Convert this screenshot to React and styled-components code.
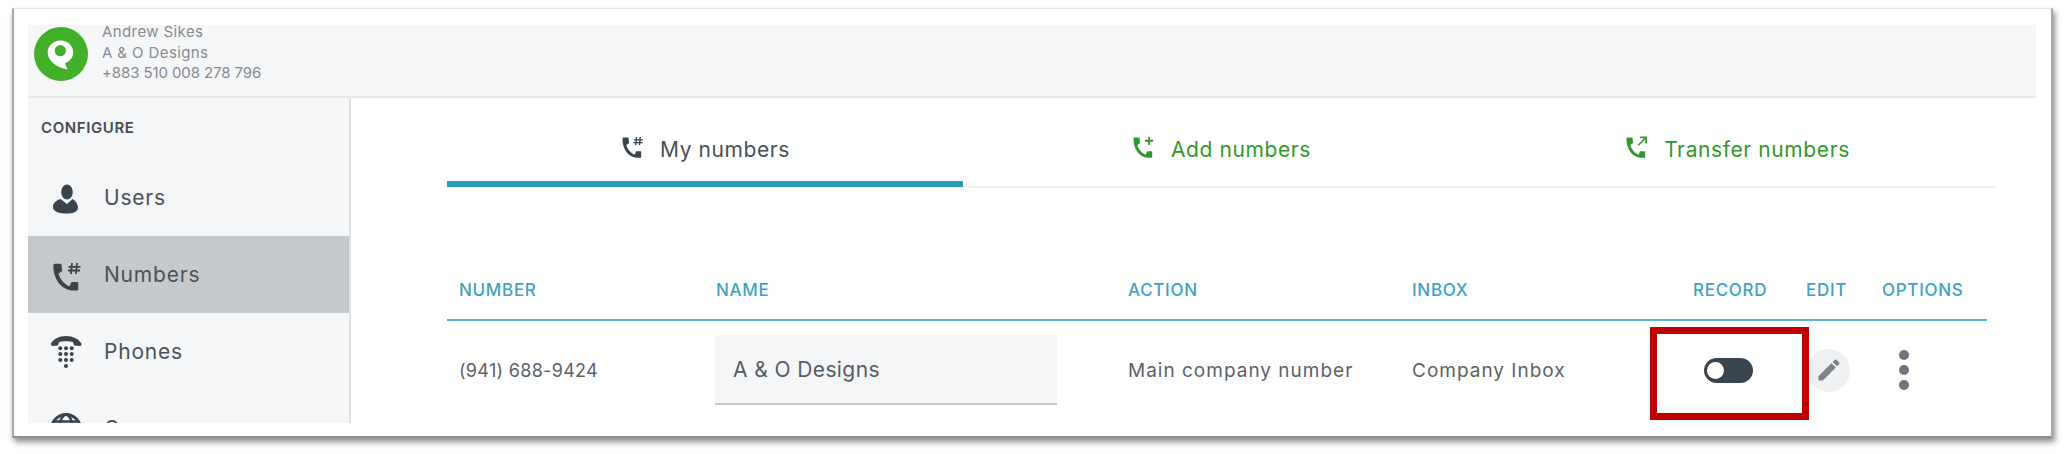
import React from 'react';
import styled, { createGlobalStyle } from 'styled-components';

const GlobalStyle = createGlobalStyle`
  html, body {
    margin: 0;
    background: #fff;
  }

  body {
    font-family: 'Inter', 'Liberation Sans', sans-serif;
    overflow: hidden;
  }
`;

const Page = styled.div`
  width: 2064px;
  height: 454px;
  padding: 8px 0 0 12px;
  box-sizing: border-box;
`;

const Frame = styled.div`
  position: relative;
  width: 2041px;
  height: 430px;
  box-sizing: border-box;
  padding: 16px 15px 13px 14px;
  background: #fff;
  border-top: 1px solid #e6e6e6;
  border-left: 2px solid #a8a8a8;
  border-right: 2px solid #a8a8a8;
  border-bottom: 2px solid #8c8c8c;
  box-shadow: 2px 4px 6px rgba(0, 0, 0, 0.45);
`;

const Shell = styled.div`
  height: 100%;
  display: flex;
  flex-direction: column;
`;

const TopBar = styled.header`
  flex: 0 0 73px;
  box-sizing: border-box;
  display: flex;
  align-items: flex-start;
  gap: 14px;
  padding: 2px 0 0 6px;
  background: #f5f6f8;
  border-bottom: 2px solid #e7e8ea;
`;

const Account = styled.div`
  display: flex;
  flex-direction: column;
  margin-top: -5px;
  font-size: 15px;
  line-height: 20.5px;
  letter-spacing: 0.4px;
  color: #858b93;
`;

const AccountPhone = styled.span`
  letter-spacing: -0.1px;
`;

const Body = styled.div`
  flex: 1;
  min-height: 0;
  display: flex;
  overflow: hidden;
`;

const Sidebar = styled.nav`
  flex: 0 0 323px;
  box-sizing: border-box;
  background: #f5f6f8;
  border-right: 2px solid #dfe0e2;
`;

const SectionTitle = styled.div`
  height: 61px;
  padding: 21px 0 0 13px;
  box-sizing: border-box;
  font-size: 15px;
  line-height: 18px;
  font-weight: 600;
  letter-spacing: 0.6px;
  color: #464c54;
`;

const NavItem = styled.div`
  height: 77px;
  display: flex;
  align-items: center;
  gap: 22px;
  padding-left: 22px;
  font-size: 21px;
  letter-spacing: 0.8px;
  color: #4a525b;
  background: ${(p) => (p.$active ? '#c6c9cc' : 'transparent')};
`;

const NavIcon = styled.svg`
  flex: 0 0 32px;
  width: 32px;
  height: 32px;
  color: #3a444c;
  fill: currentColor;
`;

const Main = styled.main`
  flex: 1;
  min-width: 0;
  padding: 0 41px 0 96px;
`;

const Tabs = styled.div`
  display: flex;
  height: 88px;
  border-bottom: 2px solid #f2f2f2;
`;

const Tab = styled.div`
  flex: 1;
  display: flex;
  align-items: center;
  justify-content: center;
  gap: 16px;
  padding: 40px 0 ${(p) => (p.$active ? 19 : 25)}px;
  margin-bottom: -1px;
  box-sizing: border-box;
  font-size: 21px;
  line-height: 24px;
  letter-spacing: 0.6px;
  color: ${(p) => (p.$active ? '#474f57' : '#2f9a2c')};
  border-bottom: ${(p) => (p.$active ? '6px solid #2b9db9' : '0')};
`;

const TabIcon = styled.svg`
  width: 24px;
  height: 24px;
  margin-top: -8px;
  color: ${(p) => (p.$active ? '#3a444c' : '#2f9a2c')};
  fill: currentColor;
`;

const Row = styled.div`
  display: grid;
  grid-template-columns: 257px 412px 284px 281px 113px 76px 1fr;
  margin-right: 8px;
  padding-left: 12px;
  align-items: center;
`;

const HeadRow = styled(Row)`
  height: 24px;
  margin-top: 90px;
  padding-bottom: 17px;
  border-bottom: 2px solid #5bb4cc;
`;

const HeadCell = styled.div`
  font-size: 17px;
  font-weight: 500;
  letter-spacing: 0.7px;
  color: #3fa3bf;
`;

const BodyRow = styled(Row)`
  margin-top: 14px;
`;

const Cell = styled.div`
  font-size: 19px;
  letter-spacing: 1px;
  color: #5b6168;
`;

const NumberCell = styled(Cell)`
  font-size: 18px;
  letter-spacing: 0.3px;
`;

const NameField = styled.div`
  width: 342px;
  height: 70px;
  margin-left: -1px;
  box-sizing: border-box;
  display: flex;
  align-items: center;
  padding-left: 18px;
  background: #f5f6f8;
  border-bottom: 2px solid #c3c7cb;
  font-size: 21px;
  letter-spacing: 0.4px;
  color: #565c63;
`;

const Toggle = styled.div`
  position: relative;
  width: 49px;
  height: 25px;
  margin-left: 11px;
  border-radius: 13px;
  background: #3b454d;

  &::before {
    content: '';
    position: absolute;
    left: 3px;
    top: 4px;
    width: 17px;
    height: 17px;
    border-radius: 50%;
    background: #fff;
  }
`;

const EditButton = styled.div`
  width: 43px;
  height: 43px;
  margin-left: 1px;
  border-radius: 50%;
  background: #eff0f2;
  display: flex;
  align-items: center;
  justify-content: center;
`;

const Dots = styled.div`
  display: flex;
  flex-direction: column;
  gap: 5px;
  margin-left: 17px;

  span {
    width: 10px;
    height: 10px;
    border-radius: 50%;
    background: #6c747d;
  }
`;

const Highlight = styled.div`
  position: absolute;
  left: 1636px;
  top: 318px;
  width: 159px;
  height: 93px;
  box-sizing: border-box;
  border: 7px solid #c00000;
  pointer-events: none;
`;

const PhoneGlyph = () => (
  <path d="M5 4.800h5.500c.5 0 .9.3.9.8l.8 6.500L8.600 14.500C9.500 19 13 24.500 19.500 27.500l2-4.500h6.800v7.500c0 .6-.4 1-1 1h-5C11 30.500 3.300 20 3.300 6.500c0-1 .7-1.700 1.700-1.700z" />
);

const Hash = () => (
  <path d="M22 4 21 15M27 4 26 15M18.500 7.800h12M18 11.500h12" fill="none" stroke="currentColor" strokeWidth="1.800" />
);

const App = () => {
  return (
    <Page>
      <GlobalStyle />
      <Frame>
        <Shell>
          <TopBar>
            <svg width="54" height="54" viewBox="0 0 54 54">
              <circle cx="27" cy="27" r="27" fill="#43b02a" />
              <path d="M26.500 13.500C33.500 13.500 39.300 18.800 39.300 25.500 39.300 30.500 35.500 34.500 31 36.200L33.500 42.500C28 41.500 22 39 18.500 35.500 15.500 32.500 13.700 29.500 13.700 25.500 13.700 18.800 19.500 13.500 26.500 13.500z" fill="#fff" />
              <circle cx="26.300" cy="23.700" r="5.600" fill="#43b02a" />
            </svg>
            <Account>
              <span>Andrew Sikes</span>
              <span>A &amp; O Designs</span>
              <AccountPhone>+883 510 008 278 796</AccountPhone>
            </Account>
          </TopBar>
          <Body>
            <Sidebar>
              <SectionTitle>CONFIGURE</SectionTitle>
              <NavItem>
                <NavIcon viewBox="0 0 32 32">
                  <ellipse cx="17" cy="10" rx="5.800" ry="7.500" />
                  <path d="M10.500 17C6 18.500 3 21 3 25c0 3 2 4 4 5 5 2 13 2 17 .5 3-1 4-3 4-5.500-.5-4-3-6.500-5.500-8l-5.500 5z" />
                </NavIcon>
                Users
              </NavItem>
              <NavItem $active>
                <NavIcon viewBox="0 0 32 32">
                  <PhoneGlyph />
                  <Hash />
                </NavIcon>
                Numbers
              </NavItem>
              <NavItem>
                <NavIcon viewBox="0 0 32 32">
                  <path d="M.7 8C3 3 9 0 16 0s13 3 15.700 8l-1 2-6.700-.5-1-3.500C20 5 12 5 9 6L8 9.500 2 10z" />
                  <circle cx="10.300" cy="12.200" r="2" /><circle cx="16" cy="12.200" r="2" /><circle cx="21.700" cy="12.200" r="2" />
                  <circle cx="10.300" cy="18" r="2" /><circle cx="16" cy="18" r="2" /><circle cx="21.700" cy="18" r="2" />
                  <circle cx="10.300" cy="24" r="2" /><circle cx="16" cy="24" r="2" /><circle cx="21.700" cy="24" r="2" />
                  <circle cx="16" cy="30" r="2" />
                </NavIcon>
                Phones
              </NavItem>
              <NavItem>
                <NavIcon viewBox="0 0 32 32">
                  <circle cx="16" cy="16" r="14.500" fill="none" stroke="currentColor" strokeWidth="3" />
                  <ellipse cx="16" cy="16" rx="6.500" ry="14.500" fill="none" stroke="currentColor" strokeWidth="2.500" />
                  <path d="M2 16h28M4 8.500h24M4 23.500h24" fill="none" stroke="currentColor" strokeWidth="2.500" />
                </NavIcon>
                Groups
              </NavItem>
            </Sidebar>
            <Main>
              <Tabs>
                <Tab $active>
                  <TabIcon $active viewBox="0 0 32 32">
                    <PhoneGlyph />
                    <Hash />
                  </TabIcon>
                  My numbers
                </Tab>
                <Tab>
                  <TabIcon viewBox="0 0 32 32">
                    <PhoneGlyph />
                    <path d="M24 3.500v11M18.500 9h11" fill="none" stroke="currentColor" strokeWidth="2.400" />
                  </TabIcon>
                  Add numbers
                </Tab>
                <Tab>
                  <TabIcon viewBox="0 0 32 32">
                    <PhoneGlyph />
                    <path d="M19 15 29 5M21.500 4.500h8v8" fill="none" stroke="currentColor" strokeWidth="2.200" />
                  </TabIcon>
                  Transfer numbers
                </Tab>
              </Tabs>
              <HeadRow>
                <HeadCell>NUMBER</HeadCell>
                <HeadCell>NAME</HeadCell>
                <HeadCell>ACTION</HeadCell>
                <HeadCell>INBOX</HeadCell>
                <HeadCell>RECORD</HeadCell>
                <HeadCell>EDIT</HeadCell>
                <HeadCell>OPTIONS</HeadCell>
              </HeadRow>
              <BodyRow>
                <NumberCell>(941) 688-9424</NumberCell>
                <NameField>A &amp; O Designs</NameField>
                <Cell>Main company number</Cell>
                <Cell>Company Inbox</Cell>
                <Toggle />
                <EditButton>
                  <svg width="28" height="28" viewBox="0 0 24 24" fill="#7b8289">
                    <path d="M3 17.250V21h3.750L17.800 9.940l-3.750-3.750L3 17.250zM20.700 7.040a1 1 0 0 0 0-1.410l-2.340-2.340a1 1 0 0 0-1.410 0l-1.830 1.830 3.750 3.750 1.830-1.830z" />
                  </svg>
                </EditButton>
                <Dots>
                  <span />
                  <span />
                  <span />
                </Dots>
              </BodyRow>
            </Main>
          </Body>
        </Shell>
        <Highlight />
      </Frame>
    </Page>
  );
};

export default App;
